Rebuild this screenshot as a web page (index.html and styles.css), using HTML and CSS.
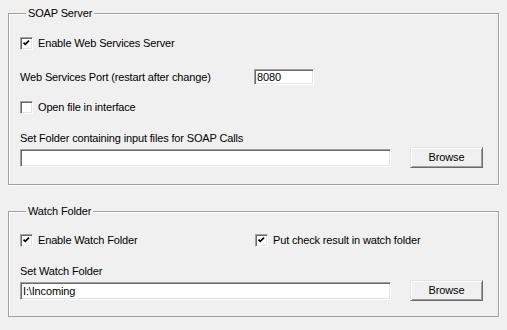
FILE: index.html
```html
<!DOCTYPE html>
<html lang="en">
<head>
  <meta charset="UTF-8">
  <title>Server Settings</title>
  <link rel="stylesheet" href="styles.css">
</head>
<body>
  <form class="settings">
    <fieldset class="group soap">
      <legend>SOAP Server</legend>
      <label class="check-row first">
        <span class="box"><svg viewBox="0 0 13 13"><polyline points="3,5.5 5,7.5 9.5,3"/></svg></span>
        Enable Web Services Server
      </label>
      <div class="port-row">
        <span class="col">Web Services Port (restart after change)</span>
        <input class="field port" type="text" value="8080">
      </div>
      <label class="check-row">
        <span class="box"></span>
        Open file in interface
      </label>
      <div class="caption">Set Folder containing input files for SOAP Calls</div>
      <div class="path-row">
        <input class="field path" type="text" value="">
        <button type="button" class="btn">Browse</button>
      </div>
    </fieldset>

    <fieldset class="group watch">
      <legend>Watch Folder</legend>
      <div class="checks">
        <label class="check-row col">
          <span class="box"><svg viewBox="0 0 13 13"><polyline points="3,5.5 5,7.5 9.5,3"/></svg></span>
          Enable Watch Folder
        </label>
        <label class="check-row">
          <span class="box"><svg viewBox="0 0 13 13"><polyline points="3,5.5 5,7.5 9.5,3"/></svg></span>
          Put check result in watch folder
        </label>
      </div>
      <div class="caption">Set Watch Folder</div>
      <div class="path-row">
        <input class="field path" type="text" value="I:\Incoming">
        <button type="button" class="btn">Browse</button>
      </div>
    </fieldset>
  </form>
</body>
</html>
```

FILE: styles.css
```css
body {
  margin: 0;
  padding: 7px 8px 0 8px;
  background: #f0f0f0;
  font-family: "Liberation Sans", Arial, sans-serif;
  font-size: 11px;
  line-height: 13px;
  letter-spacing: -0.15px;
  color: #000;
}
.group {
  box-sizing: border-box;
  width: 491px;
  margin: 0;
  padding: 0 0 16px 11px;
  border: 1px solid #a0a0a0;
  box-shadow: inset 1px 1px 0 #fff, 1px 1px 0 #fff;
}
.group legend {
  margin-left: 6px;
  padding: 0 2px;
  line-height: 13px;
  background: #f0f0f0;
}
.watch {
  margin-top: 20px;
  padding-bottom: 15px;
}
.check-row {
  display: flex;
  align-items: center;
  gap: 5px;
  height: 13px;
}
.soap .check-row {
  margin-top: 16px;
}
.soap .first {
  margin-top: 17px;
}
.box {
  box-sizing: border-box;
  width: 13px;
  height: 13px;
  background: #fff;
  border: 1px solid;
  border-color: #a0a0a0 #fff #fff #a0a0a0;
  box-shadow: inset 1px 1px 0 #696969, inset -1px -1px 0 #e3e3e3;
  flex: none;
}
.box svg {
  display: block;
  width: 11px;
  height: 11px;
}
.box polyline {
  fill: none;
  stroke: #000;
  stroke-width: 2;
}
.port-row {
  display: flex;
  align-items: center;
  height: 16px;
  margin-top: 19px;
}
.col {
  width: 234px;
  flex: none;
}
.checks {
  display: flex;
  margin-top: 16px;
}
.checks .col {
  width: 235px;
}
.caption {
  margin-top: 18px;
}
.path-row {
  display: flex;
  align-items: center;
  gap: 19px;
  height: 21px;
  margin-top: 2px;
}
.field {
  box-sizing: border-box;
  margin: 0;
  padding: 0 2px;
  font: inherit;
  letter-spacing: inherit;
  color: #000;
  background: #fff;
  border: 1px solid;
  border-color: #a0a0a0 #fff #fff #a0a0a0;
  box-shadow: inset 1px 1px 0 #696969, inset -1px -1px 0 #e3e3e3;
  outline: none;
}
.port {
  width: 60px;
  height: 16px;
}
.path {
  width: 371px;
  height: 18px;
}
.btn {
  box-sizing: border-box;
  width: 73px;
  height: 21px;
  margin: 0;
  padding: 0;
  font: inherit;
  letter-spacing: inherit;
  color: #000;
  background: #f0f0f0;
  border: 1px solid;
  border-color: #e3e3e3 #696969 #696969 #e3e3e3;
  box-shadow: inset 1px 1px 0 #fff, inset -1px -1px 0 #a0a0a0;
}
```
